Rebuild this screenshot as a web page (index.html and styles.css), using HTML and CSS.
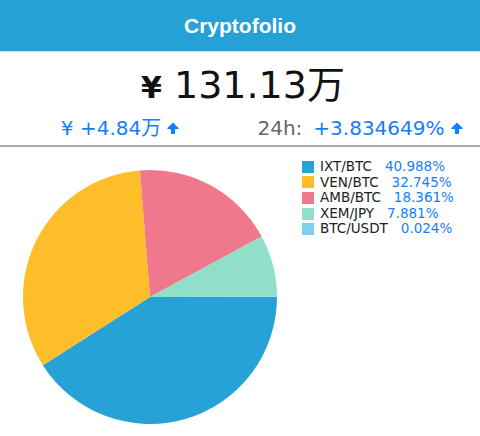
FILE: index.html
```html
<!DOCTYPE html>
<html lang="ja">
  <head>
    <meta charset="UTF-8" />
    <meta name="viewport" content="width=device-width, initial-scale=1.0" />
    <title>Cryptofolio</title>
    <link rel="stylesheet" href="styles.css">
  </head>
  <body>
    <div class="header">
      <h1>Cryptofolio</h1>
    </div>

    <div class="summary">
      <div class="total"><span class="yen">¥</span> 131.13万</div>
      <div class="changes">
        <div class="change">
          <span class="up">¥ +4.84万</span>
          <svg class="arrow" viewBox="0 0 11 11"><path d="M5.5 0.5 L10.6 5.6 Q11 6.1 10.4 6.4 L7.4 6.4 L7.4 10.4 Q7.4 11 6.8 11 L4.2 11 Q3.6 11 3.6 10.4 L3.6 6.4 L0.6 6.4 Q0 6.1 0.4 5.6 Z"/></svg>
        </div>
        <div class="change">
          <span class="label">24h:</span>
          <span class="up">+3.834649%</span>
          <svg class="arrow" viewBox="0 0 11 11"><path d="M5.5 0.5 L10.6 5.6 Q11 6.1 10.4 6.4 L7.4 6.4 L7.4 10.4 Q7.4 11 6.8 11 L4.2 11 Q3.6 11 3.6 10.4 L3.6 6.4 L0.6 6.4 Q0 6.1 0.4 5.6 Z"/></svg>
        </div>
      </div>
    </div>

    <div class="chart">
      <svg class="pie" width="300" height="290" viewBox="0 0 300 290">
        <path fill="#26a2d6" d="M150,150 L277,150 A127,127 0 0,1 42.82,218.13 Z" />
        <path fill="#febe2a" d="M150,150 L42.82,218.13 A127,127 0 0,1 139.90,23.40 Z" />
        <path fill="#f0788c" d="M150,150 L139.90,23.40 A127,127 0 0,1 261.65,89.47 Z" />
        <path fill="#90dfc8" d="M150,150 L261.65,89.47 A127,127 0 0,1 277,149.81 Z" />
        <path fill="#7dd0f0" d="M150,150 L277,149.81 A127,127 0 0,1 277,150 Z" />
      </svg>

      <ul class="legend">
        <li><span class="swatch" style="background: #26a2d6"></span>IXT/BTC<span class="pct">40.988%</span></li>
        <li><span class="swatch" style="background: #febe2a"></span>VEN/BTC<span class="pct">32.745%</span></li>
        <li><span class="swatch" style="background: #f0788c"></span>AMB/BTC<span class="pct">18.361%</span></li>
        <li><span class="swatch" style="background: #90dfc8"></span>XEM/JPY<span class="pct">7.881%</span></li>
        <li><span class="swatch" style="background: #7dd0f0"></span>BTC/USDT<span class="pct">0.024%</span></li>
      </ul>
    </div>
  </body>
</html>
```

FILE: styles.css
```css
body {
  font-family: "DejaVu Sans", "Noto Sans CJK JP", sans-serif;
  margin: 0;
  background: white;
  color: #111;
}
.header {
  background: #26a1d6;
  height: 51px;
  border-bottom: 1px solid #c9e6f3;
  display: flex;
  align-items: center;
  justify-content: center;
}
.header h1 {
  margin: 0;
  font-family: "Liberation Sans", Arial, sans-serif;
  font-size: 21px;
  font-weight: bold;
  color: white;
}
.summary {
  padding-top: 11px;
  padding-bottom: 5px;
  border-bottom: 2px solid #aaa;
}
.total {
  text-align: center;
  font-size: 38px;
  line-height: 44px;
  padding-left: 6px;
}
.yen {
  font-size: 30px;
  font-weight: bold;
}
.changes {
  display: grid;
  grid-template-columns: 1fr 1fr;
  margin-top: 6px;
  font-size: 20px;
  line-height: 24px;
}
.change {
  display: flex;
  justify-content: center;
  align-items: center;
  gap: 6px;
}
.up {
  color: #147efb;
}
.label {
  color: #666;
  margin-right: 5px;
}
.arrow {
  width: 12px;
  height: 12px;
  fill: #147efb;
}
.chart {
  display: flex;
}
.pie {
  display: block;
}
.legend {
  list-style: none;
  margin: 0;
  padding: 12px 0 0;
  font-size: 13.5px;
  line-height: 15.6px;
  color: #222;
}
.legend li {
  display: flex;
  align-items: center;
}
.swatch {
  width: 12px;
  height: 12px;
  margin-left: 2px;
  margin-right: 6px;
}
.pct {
  color: #147efb;
  margin-left: 13px;
}
```
